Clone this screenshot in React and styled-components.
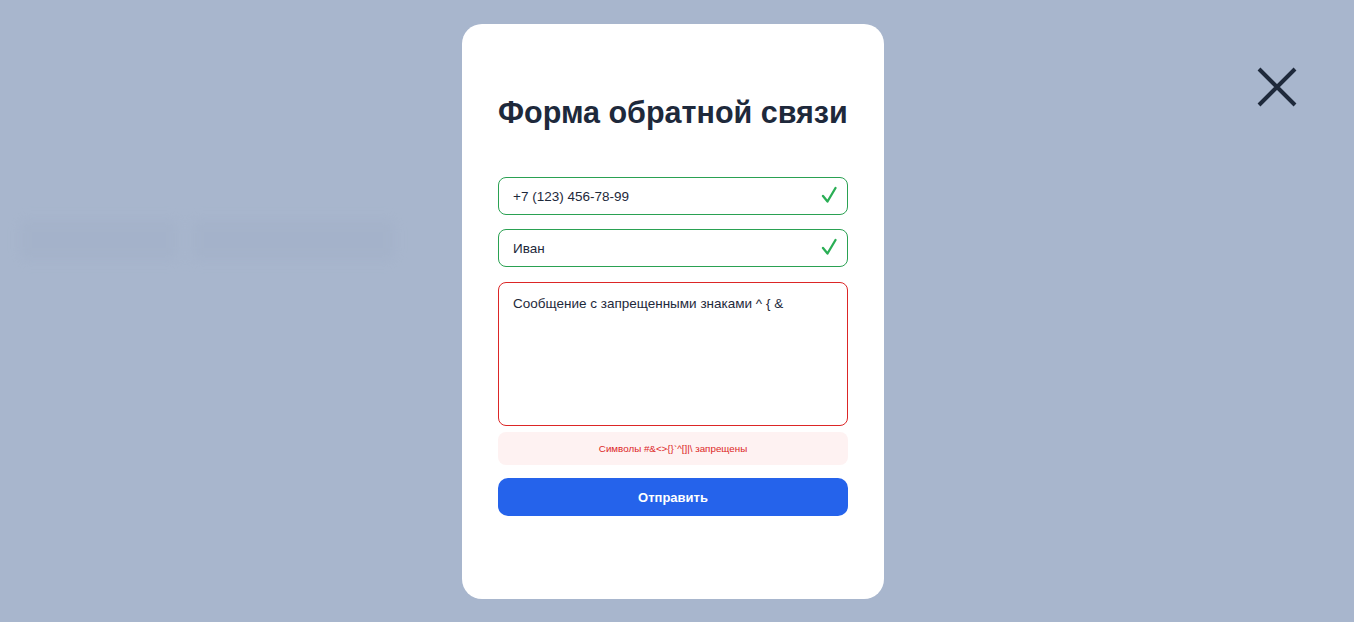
import React from 'react';
import styled, { createGlobalStyle } from 'styled-components';

const GlobalStyle = createGlobalStyle`
    html, body { margin:0; padding:0; }
    body {
        font-family: "Liberation Sans", Arial, sans-serif;
        background:#a8b6cd;
        overflow:hidden;
    }
`;

const Page = styled.div`
    position:relative;
    width:100%;
    height:100vh;
    background:#a8b6cd;
`;

const BackdropRow = styled.div`
    display:flex;
    gap:10px;
    padding:218px 0 0 18px;
    filter:blur(6px);
    opacity:0.3;
`;

const GhostButton = styled.div`
    width:${p => p.$w}px;
    height:42px;
    border-radius:6px;
    background:#9dabc4;
    border:1px solid #b3c0d4;
`;

const Overlay = styled.div`
    position:fixed;
    inset:0;
    display:flex;
    justify-content:center;
    align-items:flex-start;
    padding:24px 8px 0 0;
`;

const Modal = styled.div`
    width:422px;
    height:575px;
    box-sizing:border-box;
    background:#fff;
    border-radius:20px;
    padding:70px 36px 0;
    display:flex;
    flex-direction:column;
`;

const Title = styled.h2`
    margin:0 0 47px;
    font-size:30.5px;
    line-height:36px;
    font-weight:700;
    color:#1e293b;
    white-space:nowrap;
`;

const Field = styled.div`
    position:relative;
    margin-bottom:${p => p.$mb}px;
`;

const Input = styled.input`
    display:block;
    width:100%;
    height:38px;
    box-sizing:border-box;
    border:1px solid ${p => p.$state === 'ok' ? '#2aa152' : '#dc2626'};
    border-radius:8px;
    padding:0 40px 0 14px;
    font-family:"Liberation Sans", Arial, sans-serif;
    font-size:13.5px;
    color:#1e293b;
    outline:none;
    background:#fff;
`;

const TextArea = styled.textarea`
    display:block;
    width:100%;
    height:144px;
    box-sizing:border-box;
    border:1px solid #dc2626;
    border-radius:8px;
    padding:11px 14px;
    font-family:"Liberation Sans", Arial, sans-serif;
    font-size:13.5px;
    line-height:20px;
    color:#1e293b;
    resize:none;
    outline:none;
`;

const Check = styled.svg`
    position:absolute;
    right:11px;
    top:9px;
`;

const ErrorBox = styled.div`
    height:33px;
    border-radius:8px;
    background:#fef2f2;
    color:#dc2626;
    font-size:9.8px;
    display:flex;
    align-items:center;
    justify-content:center;
    margin-bottom:13px;
`;

const SubmitButton = styled.button`
    height:38px;
    border:none;
    border-radius:10px;
    background:#2563eb;
    color:#fff;
    font-family:"Liberation Sans", Arial, sans-serif;
    font-weight:700;
    font-size:13px;
    cursor:pointer;
`;

const CloseButton = styled.button`
    position:absolute;
    top:66px;
    right:56px;
    width:42px;
    height:42px;
    padding:0;
    border:none;
    background:transparent;
    cursor:pointer;
`;

const CheckIcon = () => (
    <Check width="16" height="18" viewBox="0 0 16 18">
        <path d="M2 10 L6.5 15.5 L14.5 2" fill="none" stroke="#2aae55" strokeWidth="2.3" strokeLinecap="round" strokeLinejoin="round" />
    </Check>
);

const App = () => {
    return (
        <Page>
            <GlobalStyle />
            <BackdropRow>
                <GhostButton $w={160} />
                <GhostButton $w={205} />
            </BackdropRow>

            <Overlay>
                <Modal>
                    <Title>Форма обратной связи</Title>

                    <Field $mb={14}>
                        <Input $state="ok" defaultValue="+7 (123) 456-78-99" />
                        <CheckIcon />
                    </Field>
                    <Field $mb={15}>
                        <Input $state="ok" defaultValue="Иван" />
                        <CheckIcon />
                    </Field>
                    <Field $mb={6}>
                        <TextArea defaultValue="Сообщение с запрещенными знаками ^ { &" />
                    </Field>

                    <ErrorBox>Символы #&amp;&lt;&gt;{'{}'}`^[]|\ запрещены</ErrorBox>

                    <SubmitButton>Отправить</SubmitButton>
                </Modal>
            </Overlay>

            <CloseButton aria-label="close">
                <svg width="42" height="42" viewBox="0 0 42 42">
                    <path d="M3 3 L39 39 M39 3 L3 39" stroke="#1e293b" strokeWidth="4" />
                </svg>
            </CloseButton>
        </Page>
    );
};

export default App;
